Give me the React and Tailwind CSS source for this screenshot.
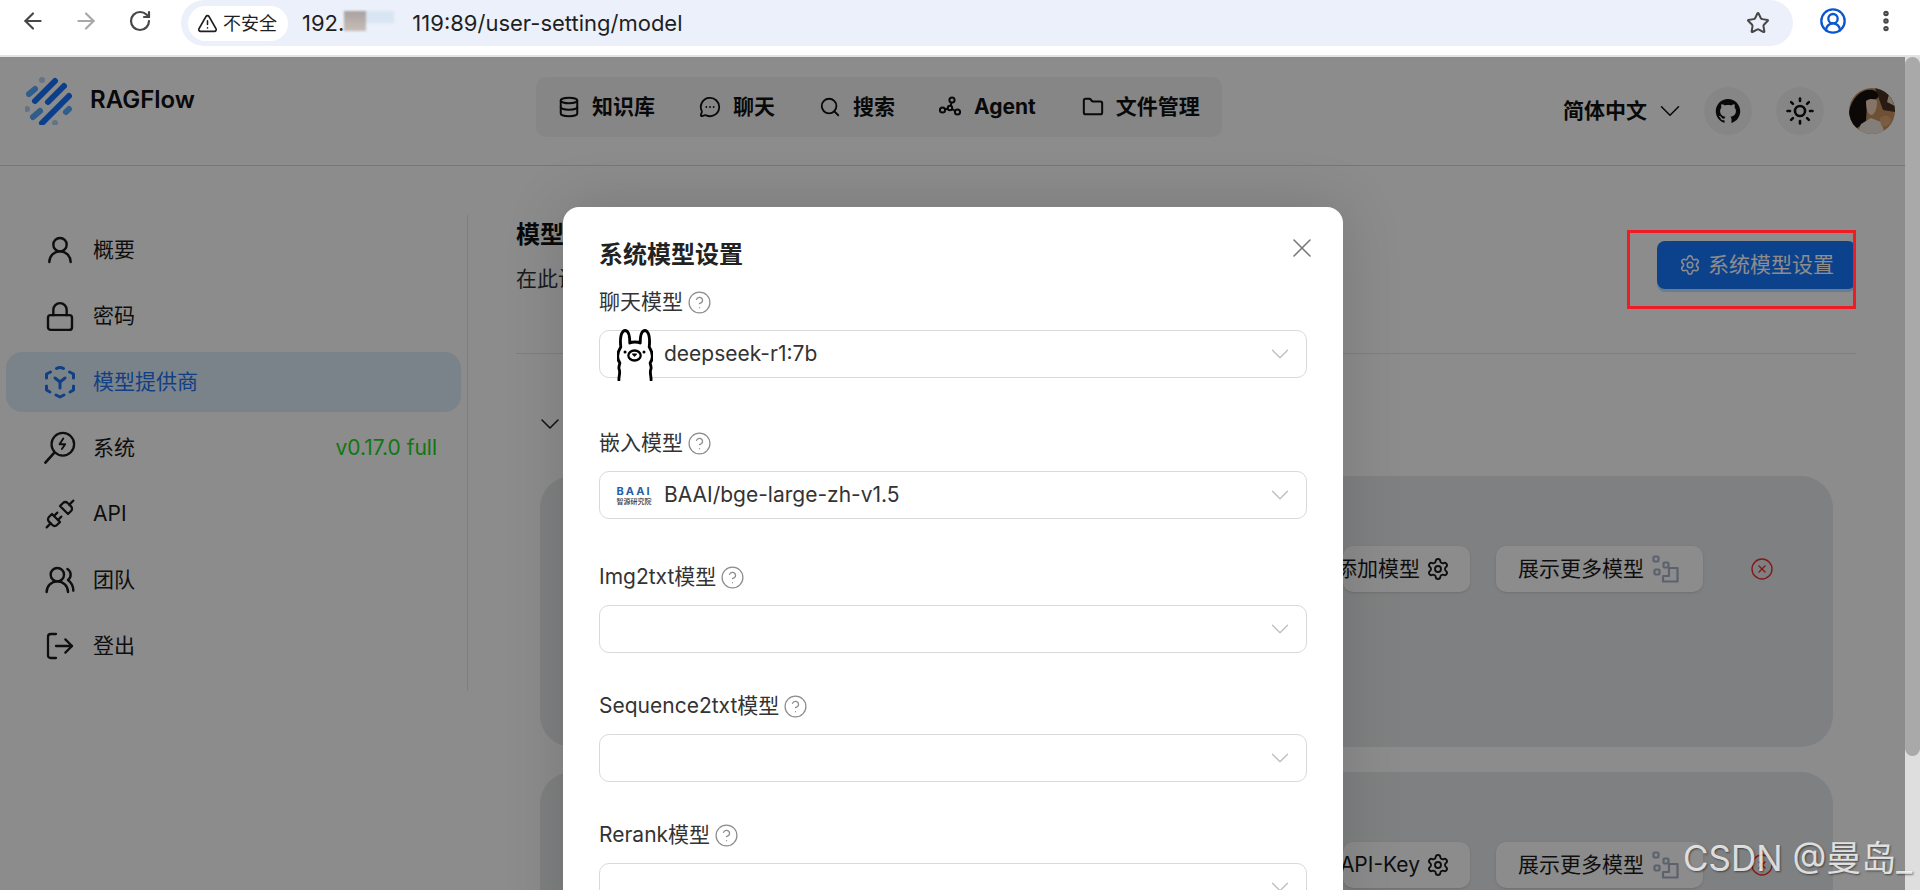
import { ArrowLeft, ArrowRight, RotateCw, Star, CircleUserRound, EllipsisVertical, Database, MessageCircleMore, Search, Folder, ChevronDown, Sun, X, Settings, CircleHelp, UserRound, Lock, LogOut, Unplug, UsersRound, CircleX, TriangleAlert } from 'lucide-react';
import { AiOutlineGithub } from 'react-icons/ai';

const FONT = '"Inter", "Noto Sans CJK SC", "Noto Sans", sans-serif';

const Logo = () => (
  <svg width="50" height="50" viewBox="10 10 50 50">
    <g strokeLinecap="round" fill="none" strokeWidth="6">
      <path d="M14 29 L20 24" stroke="#57aaff" />
      <path d="M20 36 L40 16" stroke="#1474ff" />
      <path d="M33 37 L49 21" stroke="#1474ff" />
      <path d="M27 58 L54 31" stroke="#1474ff" />
      <path d="M18 52 L25 46" stroke="#57aaff" />
      <path d="M51 47 L54 44" stroke="#57aaff" />
    </g>
    <circle cx="27" cy="15" r="3" fill="#b4d4f5" />
    <circle cx="12" cy="44" r="3" fill="#b4d4f5" />
    <circle cx="40" cy="58" r="3" fill="#b4d4f5" />
  </svg>
);

const AgentIcon = () => (
  <svg width="24" height="24" viewBox="0 0 24 24" fill="none" stroke="currentColor" strokeWidth="2">
    <circle cx="14" cy="5" r="2.6" />
    <circle cx="4.5" cy="15" r="2.6" />
    <circle cx="19.5" cy="17" r="2.6" />
    <circle cx="12" cy="13" r="2.2" />
    <path d="M13.5 7.5 L12.6 11 M7 14.5 L10 13.5 M14 14 L17.2 16" />
  </svg>
);

const Avatar = () => (
  <svg width="46" height="46" viewBox="0 0 46 46" className="rounded-full">
    <rect width="46" height="46" fill="#c9935f" />
    <path d="M26 0 H46 V24 L34 22 Z" fill="#4a3226" />
    <path d="M40 6 L46 10 V18 L38 14 Z" fill="#e8d6b8" />
    <path d="M0 24 C3 8 14 0 24 2 C31 4 30 10 27 11 L18 14 L17 34 L8 40 L0 34 Z" fill="#15100e" />
    <path d="M17 13 C21 10 27 11 28 13 C28 19 27 25 23 27 C19 27 17 22 17 13 Z" fill="#f2d4bd" />
    <path d="M8 46 L12 36 L22 30 L32 34 L36 46 Z" fill="#efe6dc" />
    <path d="M31 30 C36 26 42 28 42 33 C41 38 35 40 32 37 Z" fill="#e0a878" />
  </svg>
);

const Llama = () => (
  <svg width="36" height="52" viewBox="0 0 38 52" fill="white" stroke="black" strokeWidth="3" strokeLinejoin="round" strokeLinecap="round" preserveAspectRatio="none">
    <path d="M2 51 C2 46 3.5 44 2.5 41 C1 38 3 36 3 34 C0 30 0 24 4 18 C3 10 4 2 8.5 1.5 C13 1.5 13.5 9 13.5 14 C16 12.5 22 12.5 24.5 14 C24.5 9 25 1.5 29.5 1.5 C34 2 35 10 34 18 C38 24 38 30 35 34 C35 36 37 38 35.5 41 C34.5 44 36 46 36 51" />
    <ellipse cx="18.5" cy="26.5" rx="6.5" ry="5" strokeWidth="2.4" />
    <path d="M16.5 25 H20.5 L18.5 27 Z" fill="black" strokeWidth="1.2" />
    <circle cx="8.5" cy="23" r="1.6" fill="black" stroke="none" />
    <circle cx="28.5" cy="23" r="1.6" fill="black" stroke="none" />
  </svg>
);

const BaaiLogo = () => (
  <div className="flex w-[36px] shrink-0 flex-col items-center leading-none">
    <span className="text-[11px] font-bold tracking-[2px] text-[#1f5fa8]">BAAI</span>
    <span className="mt-[1px] whitespace-nowrap text-[7px] font-medium text-[#333]">智源研究院</span>
  </div>
);

const ModelIcon = () => (
  <svg width="32" height="34" viewBox="0 0 32 34" fill="none" stroke="#1f74f0" strokeWidth="3" strokeLinecap="round" strokeLinejoin="round">
    <path d="M12.5 3.5 Q16 1.5 19.5 3.5" />
    <path d="M25.5 7 L29.5 9 V13" />
    <path d="M6.5 7 L2.5 9 V13" />
    <path d="M2.5 21 V25 L6 27" />
    <path d="M29.5 21 V25 L26 27" />
    <path d="M12 30 L16 32 L20 30" />
    <path d="M11 13 L16 17 L21 13 M16 17 V23" />
  </svg>
);

const SystemIcon = () => (
  <svg width="34" height="34" viewBox="0 0 34 34" fill="none" stroke="#1b1b1b" strokeWidth="2.4" strokeLinecap="round" strokeLinejoin="round">
    <circle cx="20" cy="13" r="12" />
    <path d="M11 22 L1.5 32.5" strokeWidth="2.8" />
    <path d="M20.5 7 L16.5 13 H22.5 L19 18" strokeWidth="2" />
  </svg>
);

const StairsIcon = () => (
  <svg width="27" height="28" viewBox="0 0 27 28" fill="none" stroke="#a6b2c6" strokeWidth="2.2" strokeLinejoin="round">
    <rect x="1.5" y="1.5" width="5" height="5" rx="1" />
    <rect x="11.5" y="7.5" width="5" height="5" rx="1" />
    <rect x="2.5" y="14.5" width="5" height="5" rx="1" />
    <path d="M11 26.5 V21 H17 V13 H25.5 V26.5 Z" />
  </svg>
);

const navItems = [
  { icon: <Database size={22} strokeWidth={2.2} />, label: '知识库', className: 'ml-[22px]' },
  { icon: <MessageCircleMore size={22} strokeWidth={2} />, label: '聊天', className: 'ml-[44px]' },
  { icon: <Search size={22} strokeWidth={2} />, label: '搜索', className: 'ml-[44px]' },
  { icon: <AgentIcon />, label: 'Agent', className: 'ml-[43px]' },
  { icon: <Folder size={22} strokeWidth={2.2} />, label: '文件管理', className: 'ml-[46px]' },
];

const sideItems = [
  { icon: <UserRound size={36} strokeWidth={1.8} />, label: '概要' },
  { icon: <Lock size={35} strokeWidth={1.8} />, label: '密码' },
  { icon: <ModelIcon />, label: '模型提供商', active: true },
  { icon: <SystemIcon />, label: '系统', version: 'v0.17.0 full' },
  { icon: <Unplug size={40} strokeWidth={1.7} />, label: 'API' },
  { icon: <UsersRound size={36} strokeWidth={1.8} />, label: '团队' },
  { icon: <LogOut size={38} strokeWidth={1.7} />, label: '登出' },
];

const BrowserBar = () => (
  <div className="flex h-[57px] shrink-0 border-b-2 border-[#e3e3e3] bg-white">
    <div className="flex w-[181px] shrink-0 items-start pl-[20px] pt-[8px]">
      <ArrowLeft size={26} strokeWidth={2} className="text-[#474747]" />
      <ArrowRight size={26} strokeWidth={2} className="ml-[27px] text-[#a8a8a8]" />
      <RotateCw size={24} strokeWidth={2.2} className="ml-[29px] mt-[1px] text-[#474747]" />
    </div>
    <div className="flex h-[46px] w-[1612px] items-center rounded-l-[24px] rounded-r-[24px] bg-[#ebf0fa] pl-[7px] pr-[23px]">
      <div className="flex h-[35px] w-[100px] items-center gap-[5px] rounded-full bg-white pl-[9px] text-[18px] text-[#1f1f1f]">
        <TriangleAlert size={21} strokeWidth={1.8} />
        <span>不安全</span>
      </div>
      <div className="ml-[14px] flex items-center text-[22px] text-[#1f1f1f]">
        <span>192.</span>
        <div className="flex h-[24px] w-[68px] items-start blur-[1px]">
          <div className="h-[20px] w-[22px] bg-gradient-to-b from-[#a9a2a0] to-[#c9bdb8]" />
          <div className="h-[12px] w-[28px] bg-[#d9e5f2]" />
        </div>
        <span>119:89/user-setting/model</span>
      </div>
      <Star size={24} strokeWidth={2} className="ml-auto text-[#474747]" />
    </div>
    <CircleUserRound size={28} strokeWidth={2} className="ml-[26px] mt-[7px] text-[#0b57d0]" />
    <EllipsisVertical size={26} strokeWidth={3} className="ml-[26px] mt-[8px] text-[#474747]" />
  </div>
);

const Header = () => (
  <div className="flex h-[109px] shrink-0 items-start border-b border-[#d9d9d9] text-[#111]">
    <div className="ml-[25px] mt-[18px] flex items-center gap-[15px]">
      <Logo />
      <span className="-mt-[1px] text-[24px] font-semibold">RAGFlow</span>
    </div>
    <div className="ml-[341px] mt-[20px] flex h-[60px] w-[686px] items-center rounded-[10px] bg-[#f5f5f5] text-[21px] font-bold">
      {navItems.map((item) => (
        <div key={item.label} className={`flex items-center gap-[12px] ${item.className}`}>
          {item.icon}
          <span>{item.label}</span>
        </div>
      ))}
    </div>
    <div className="ml-[341px] mt-[30px] flex items-center text-[21px] font-bold">
      <span>简体中文</span>
      <ChevronDown size={34} strokeWidth={1.1} className="ml-[6px]" />
      <div className="ml-[17px] flex h-[48px] w-[48px] items-center justify-center rounded-full bg-[#f5f5f5]">
        <AiOutlineGithub size={28} />
      </div>
      <div className="ml-[24px] flex h-[48px] w-[48px] items-center justify-center rounded-full bg-[#f5f5f5]">
        <Sun size={30} strokeWidth={2.1} />
      </div>
      <div className="ml-[25px] h-[46px] w-[46px]">
        <Avatar />
      </div>
    </div>
  </div>
);

const Sidebar = () => (
  <div className="mt-[49px] flex h-[476px] w-[468px] shrink-0 flex-col gap-[6px] border-r border-[#e5e5e5] pl-[6px] pr-[6px] pt-[5px]">
    {sideItems.map((item) => (
      <div
        key={item.label}
        className={`flex h-[60px] shrink-0 items-center rounded-[16px] pl-[38px] pr-[24px] text-[21px] ${item.active ? 'bg-[#e1eefc] text-[#1f74f0]' : 'text-[#1b1b1b]'}`}
      >
        <div className="flex w-[32px] justify-center">{item.icon}</div>
        <span className="ml-[17px]">{item.label}</span>
        {item.version && <span className="ml-auto text-[#1fd81f]">{item.version}</span>}
      </div>
    ))}
  </div>
);

const ProviderCard = ({ action, className }) => (
  <div className={`flex items-start rounded-[32px] bg-[#e8e9eb] pl-[803px] ${className}`}>
    <div className="flex h-[46px] w-[127px] items-center justify-end gap-[6px] rounded-[10px] bg-white pr-[20px] text-[21px] text-[#1b1b1b] shadow-sm">
      <span className="whitespace-nowrap">{action}</span>
      <Settings size={24} strokeWidth={1.9} className="shrink-0" />
    </div>
    <div className="ml-[26px] flex h-[46px] w-[207px] items-center gap-[8px] rounded-[10px] bg-white pl-[22px] text-[21px] text-[#1b1b1b] shadow-sm">
      <span>展示更多模型</span>
      <StairsIcon />
    </div>
    <CircleX size={24} strokeWidth={1.4} className="ml-[47px] mt-[11px] text-[#f02a2a]" />
  </div>
);

const Main = () => (
  <div className="ml-[48px] mt-[46px] w-[1340px] shrink-0">
    <div className="flex h-[142px] items-start justify-between border-b border-[#e5e5e5]">
      <div>
        <div className="mt-[7px] text-[24px] font-bold leading-[32px] text-[#111]">模型提供商</div>
        <div className="mt-[14px] text-[21px] leading-[28px] text-[#333]">在此设置模型参数和 API KEY。</div>
      </div>
      <div className="mt-[29px] flex h-[48px] w-[199px] items-center gap-[7px] rounded-[8px] bg-[#1677ff] pl-[22px] text-[21px] text-white shadow-[0_3px_0_rgba(5,145,255,0.25)]">
        <Settings size={22} strokeWidth={1.7} />
        <span>系统模型设置</span>
      </div>
    </div>
    <div className="ml-[18px] mt-[54px] flex">
      <ChevronDown size={32} strokeWidth={1.2} className="text-[#222]" />
    </div>
    <ProviderCard action="添加模型" className="ml-[24px] mt-[36px] h-[271px] w-[1293px] pt-[70px]" />
    <ProviderCard action="API-Key" className="ml-[24px] mt-[25px] h-[271px] w-[1293px] pt-[70px]" />
  </div>
);

const ModelField = ({ label, className, icon, value, valueClass }) => (
  <div className={className}>
    <div className="flex h-[28px] items-center gap-[4px] text-[21px] text-[#333]">
      <span>{label}</span>
      <CircleHelp size={25} strokeWidth={1.2} className="text-[#8c8c8c]" />
    </div>
    <div className="mt-[14px] flex h-[48px] items-center rounded-[10px] border border-[#d9d9d9] pl-[16px] pr-[11px]">
      {icon}
      {value && <span className={`text-[21px] text-[#333] ${valueClass}`}>{value}</span>}
      <ChevronDown size={30} strokeWidth={1.1} className="ml-auto text-[#bfbfbf]" />
    </div>
  </div>
);

const ModelDialog = () => (
  <div className="absolute left-[563px] top-[150px] h-[800px] w-[780px] rounded-[16px] bg-white pl-[36px] pr-[36px] pt-[31px] shadow-[0_0_60px_rgba(0,0,0,0.15)]">
    <div className="flex h-[34px] items-center justify-between text-[24px] font-bold text-[#222]">
      <span>系统模型设置</span>
      <X size={32} strokeWidth={1.2} className="-mr-[11px] -mt-[14px] text-[#7a7a7a]" />
    </div>
    <ModelField
      label="聊天模型"
      className="mt-[16px]"
      icon={<div className="ml-[1px] h-[52px] w-[36px] shrink-0 translate-y-[1px]"><Llama /></div>}
      value="deepseek-r1:7b"
      valueClass="ml-[11px]"
    />
    <ModelField label="嵌入模型" className="mt-[51px]" icon={<BaaiLogo />} value="BAAI/bge-large-zh-v1.5" valueClass="ml-[12px]" />
    <ModelField label="Img2txt模型" className="mt-[44px]" />
    <ModelField label="Sequence2txt模型" className="mt-[39px]" />
    <ModelField label="Rerank模型" className="mt-[39px]" />
  </div>
);

export default function App() {
  return (
    <div className="flex h-[890px] w-[1920px] flex-col overflow-hidden bg-white" style={{ fontFamily: FONT }}>
      <BrowserBar />
      <div className="relative flex min-h-0 flex-1 overflow-hidden">
        <div className="flex w-[1905px] shrink-0 flex-col overflow-hidden">
          <Header />
          <div className="flex">
            <Sidebar />
            <Main />
          </div>
        </div>
        <div className="flex w-[15px] shrink-0 flex-col bg-[#dedede]">
          <div className="h-[699px] rounded-[8px] bg-[#a9a9a9]" />
        </div>

        <div className="absolute bottom-0 left-0 top-0 w-[1905px] bg-black/45" />
        <ModelDialog />

        <div className="absolute left-[1627px] top-[173px] h-[79px] w-[229px] border-[3px] border-[#ee1c25]" />
        <div className="absolute bottom-[14px] left-[1683px] whitespace-nowrap text-[35px] leading-[36px] text-white/80 [text-shadow:1px_1px_2px_rgba(0,0,0,0.5)]">
          CSDN @曼岛_
        </div>
      </div>
    </div>
  );
}
